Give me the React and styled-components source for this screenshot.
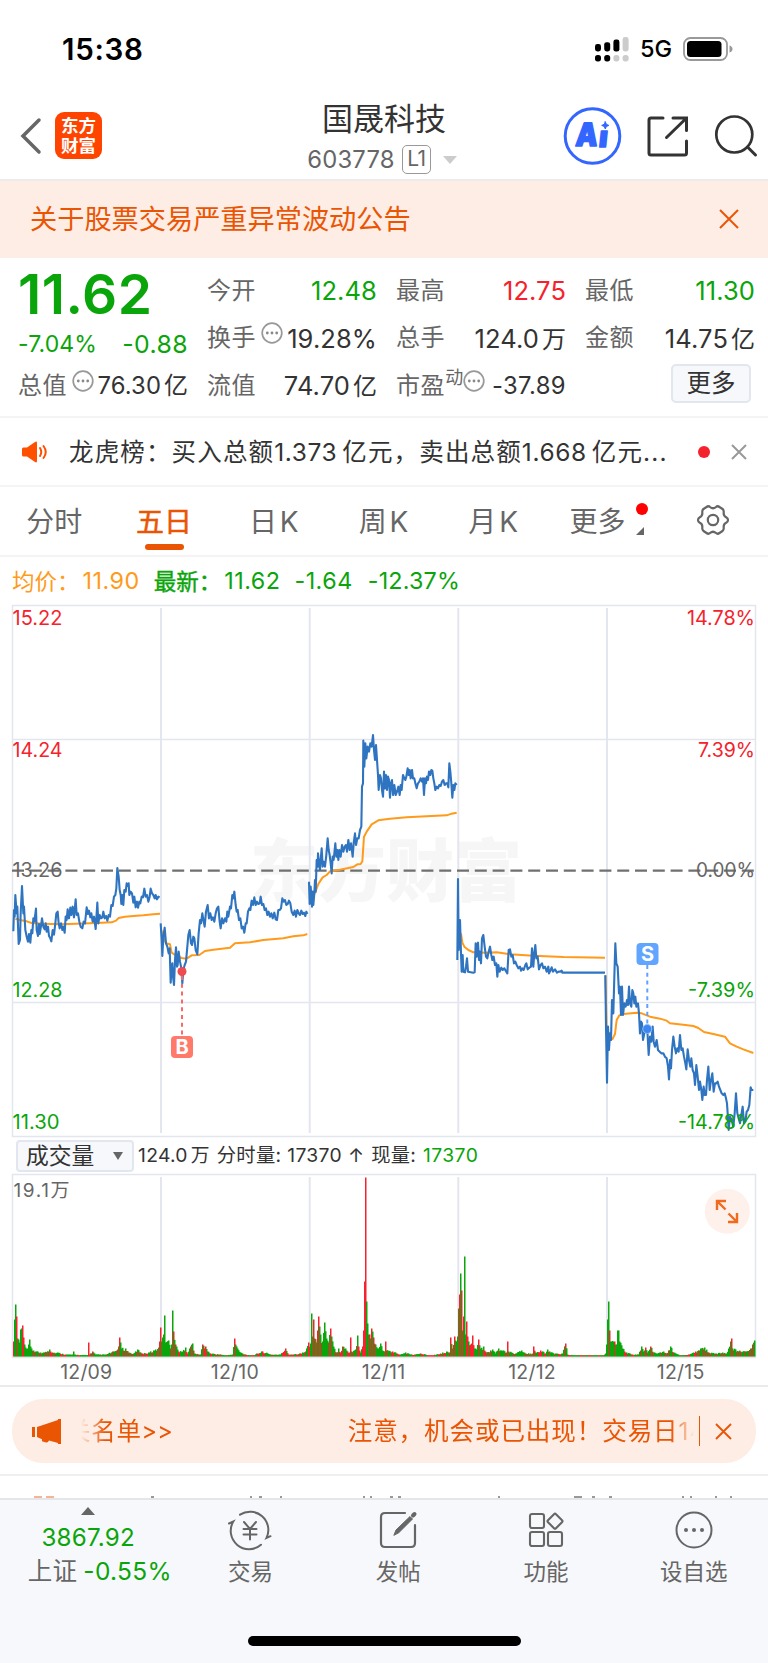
import React from "react";
import styled, { createGlobalStyle } from "styled-components";

const C = {
  green: "#0aa50a",
  red: "#f5222d",
  orange: "#ea5504",
  peach: "#feede5",
  amber: "#ff9a1a",
  blue: "#2f74c0",
  dark: "#333",
  gray: "#666",
  grid: "#e3e6ee",
  line: "#f4f4f5",
};

const FONT = 'Inter, "Noto Sans CJK SC", sans-serif';

const Global = createGlobalStyle`
  * { box-sizing: border-box; }
  body { margin: 0; background: #fff; }
  svg { display: block; flex: none; overflow: visible; }
`;

const Screen = styled.div`
  width: 768px;
  height: 1663px;
  overflow: hidden;
  display: flex;
  flex-direction: column;
  background: #fff;
  color: ${C.dark};
  font-family: ${FONT};
  white-space: nowrap;
`;

const Text = styled.span`
  font-size: ${(p) => p.$size}px;
  line-height: ${(p) => Math.round(p.$size * 1.2)}px;
  letter-spacing: ${(p) => p.$ls || 0}px;
  color: ${(p) => p.$color || "inherit"};
  font-weight: ${(p) => p.$weight || 400};
  margin-left: ${(p) => p.$ml || 0}px;
  -webkit-text-stroke: ${(p) => (p.$strong ? "0.4px currentColor" : "0")};
`;

/* status bar */
const StatusBar = styled.div`
  height: 98px;
  flex: none;
  display: flex;
  justify-content: space-between;
  align-items: center;
  padding: 0 35px 0 62px;
`;
const StatusIcons = styled.div`
  display: flex;
  align-items: center;
`;

/* header */
const Header = styled.header`
  height: 83px;
  flex: none;
  display: grid;
  grid-template-columns: 248px 1fr 248px;
  border-bottom: 2px solid #ececee;
`;
const HeaderLeft = styled.div`
  display: flex;
  align-items: flex-start;
  padding: 14px 0 0 20px;
`;
const Logo = styled.div`
  width: 47px;
  height: 47px;
  margin-left: 14px;
  border-radius: 9px;
  background: #ff4400;
  color: #fff;
  font-weight: 700;
  font-size: 17.5px;
  line-height: 20px;
  padding: 4px 0 0 6px;
  white-space: pre-line;
`;
const HeaderTitle = styled.div`
  display: flex;
  flex-direction: column;
  align-items: center;
  padding-top: 2px;
`;
const CodeLine = styled.div`
  display: flex;
  align-items: center;
  margin-top: 8px;
  margin-left: -4px;
`;
const Level = styled.span`
  width: 29px;
  height: 29px;
  margin-left: 7px;
  border: 1.5px solid #999;
  border-radius: 5px;
  font-size: 21px;
  line-height: 26px;
  text-align: center;
  letter-spacing: -0.8px;
  color: ${C.gray};
`;
const HeaderRight = styled.div`
  display: flex;
  align-items: flex-start;
  justify-content: flex-end;
  padding: 8px 11px 0 0;
`;

/* notices */
const Notice = styled.div`
  height: 77px;
  flex: none;
  display: flex;
  align-items: center;
  justify-content: space-between;
  padding: 0 29px 1px 30px;
  background: ${C.peach};
`;

/* quote */
const Quote = styled.section`
  height: 160px;
  flex: none;
  display: grid;
  grid-template-columns: repeat(4, 170px);
  column-gap: 19px;
  padding: 9px 0 0 18px;
  border-bottom: 2px solid ${C.line};
`;
const QuoteColumn = styled.div`
  display: flex;
  flex-direction: column;
`;
const StatRow = styled.div`
  height: ${(p) => p.$h || 47.5}px;
  display: flex;
  align-items: center;
  padding-top: ${(p) => p.$pt || 0}px;
  padding-bottom: ${(p) => p.$pb || 0}px;
  justify-content: ${(p) => (p.$end ? "flex-end" : "space-between")};
`;
const StatLabel = styled.span`
  display: flex;
  align-items: center;
  font-size: 24px;
  line-height: 28px;
  letter-spacing: 0.6px;
  color: ${C.gray};
`;
const Sup = styled.sup`
  font-size: 18px;
  line-height: 18px;
  margin-bottom: 15px;
  letter-spacing: 0;
`;
const InfoMark = styled.svg`
  margin-bottom: 10px;
  margin-left: ${(p) => p.$ml}px;
`;
const MoreButton = styled.button`
  width: 80px;
  height: 39px;
  margin-right: 4px;
  padding: 0;
  border: 2px solid #e3e6ee;
  border-radius: 5px;
  background: #f7f8fb;
  font: 24.5px/33px ${FONT};
  color: ${C.dark};
`;

const News = styled.div`
  height: 69px;
  flex: none;
  display: flex;
  align-items: center;
  padding: 0 21px 0 21px;
  border-bottom: 2px solid ${C.line};
`;
const NewsText = styled.div`
  flex: 1;
  margin-left: 21px;
  font-size: 24.5px;
  line-height: 30px;
`;
const Dot = styled.i`
  width: 12px;
  height: 12px;
  border-radius: 50%;
  background: ${C.red};
  margin-right: 21px;
`;

/* period tabs */
const Tabs = styled.nav`
  height: 70px;
  flex: none;
  display: grid;
  grid-template-columns: repeat(7, 1fr);
  border-bottom: 2px solid ${C.line};
`;
const Tab = styled.div`
  position: relative;
  display: flex;
  align-items: center;
  justify-content: center;
  font-size: 28px;
  word-spacing: -5px;
  padding: 0 ${(p) => p.$shift || 1}px 3px 0;
  color: ${(p) => (p.$active ? C.orange : C.gray)};
  -webkit-text-stroke: ${(p) => (p.$active ? "0.5px currentColor" : "0")};
`;
const Underline = styled.i`
  position: absolute;
  bottom: 5px;
  width: 39px;
  height: 6.5px;
  border-radius: 3px;
  background: ${C.orange};
`;
const TabMark = styled.svg`
  position: absolute;
  left: 85.5px;
  top: 14px;
`;

const Legend = styled.div`
  height: 48px;
  flex: none;
  display: flex;
  align-items: center;
  padding-left: 12px;
`;
const ChartWrap = styled.div`
  height: ${(p) => p.$h}px;
  flex: none;
  padding-left: 12px;
`;
const VolumeBar = styled.div`
  height: 37px;
  flex: none;
  display: flex;
  align-items: center;
  padding-left: 16px;
`;
const VolumeSelect = styled.div`
  width: 118px;
  height: 32px;
  display: flex;
  align-items: center;
  justify-content: space-between;
  padding: 0 9px 0 8px;
  border: 2px solid #e3e6ee;
  border-radius: 4px;
  background: #f7f8fb;
`;
const Dates = styled.div`
  height: 30px;
  flex: none;
  display: grid;
  grid-template-columns: repeat(5, 148.6px);
  padding: 2px 0 0 12px;
  align-items: center;
  justify-items: center;
  border-bottom: 2px solid #ebebed;
`;

const Banner = styled.div`
  height: 64px;
  flex: none;
  margin: 12px 12px 11px;
  display: flex;
  align-items: center;
  padding: 0 24px 0 19px;
  border-radius: 31px;
  background: ${C.peach};
  color: ${C.orange};
`;
const Marquee = styled.div`
  width: 615px;
  margin-left: 19px;
  overflow: hidden;
  mask-image: linear-gradient(90deg, transparent 0, #000 24px, #000 590px, transparent 613px);
`;
const MarqueeText = styled.div`
  display: flex;
  align-items: center;
  height: 36px;
  margin-left: -15px;
`;
const Divider = styled.i`
  width: 1.5px;
  height: 30px;
  margin-right: 15px;
  margin-left: 4px;
  background: ${C.orange};
`;
const NextPanel = styled.div`
  height: 24px;
  flex: none;
  display: flex;
  align-items: flex-end;
  border-top: 2px solid #eeeff0;
`;

/* bottom bar */
const BottomBar = styled.footer`
  flex: 1;
  background: #f7f8fb;
  border-top: 2px solid #e4e6e9;
  display: flex;
  flex-direction: column;
  align-items: center;
`;
const BottomItems = styled.div`
  width: 100%;
  display: grid;
  grid-template-columns: 176.5px repeat(4, 147.8px);
`;
const IndexItem = styled.div`
  display: flex;
  flex-direction: column;
  align-items: center;
  padding-top: 7px;
  color: ${C.green};
`;
const IndexRow = styled.div`
  display: flex;
  align-items: center;
  margin: 5px 0 0 23px;
`;
const BottomItem = styled.div`
  display: flex;
  flex-direction: column;
  align-items: center;
  gap: 9px;
  padding-top: 11px;
  color: ${C.gray};
`;
const HomeIndicator = styled.i`
  width: 273px;
  height: 10px;
  margin-top: 50px;
  border-radius: 5px;
  background: #000;
`;

const Cross = ({ size, color, w = 2 }) => (
  <svg width={size} height={size} viewBox={`0 0 ${size} ${size}`} stroke={color} strokeWidth={w}>
    <path d={`M1 1L${size - 1} ${size - 1}M${size - 1} 1L1 ${size - 1}`} />
  </svg>
);

const Info = ({ ml }) => (
  <InfoMark $ml={ml} width="22" height="22" viewBox="0 0 22 22">
    <circle cx="11" cy="11" r="9.8" fill="none" stroke="#999" strokeWidth="1.7" />
    <g fill="#888">
      <circle cx="6.3" cy="11" r="1.4" />
      <circle cx="11" cy="11" r="1.4" />
      <circle cx="15.7" cy="11" r="1.4" />
    </g>
  </InfoMark>
);

const Signal = () => (
  <svg width="34" height="25" viewBox="0 0 34 25">
    <rect x="0" y="7" width="6" height="7.5" rx="2.4" />
    <rect x="9.2" y="5.2" width="6" height="9.3" rx="2.4" />
    <rect x="18.4" y="2.6" width="6" height="12" rx="2.4" />
    <rect x="27.6" y="0" width="6" height="14.5" rx="2.4" fill="#ccc" />
    <rect x="0" y="18" width="6" height="6.4" rx="2.6" />
    <rect x="9.2" y="18" width="6" height="6.4" rx="2.6" />
    <rect x="18.4" y="18" width="6" height="6.4" rx="2.6" fill="#ccc" />
    <rect x="27.6" y="18" width="6" height="6.4" rx="2.6" fill="#ccc" />
  </svg>
);

const Battery = () => (
  <svg width="50" height="24" viewBox="0 0 50 24" style={{ marginLeft: 11 }}>
    <rect x="1" y="1" width="43" height="22" rx="6.5" fill="none" stroke="#999" strokeWidth="1.8" />
    <rect x="4" y="4" width="34.5" height="16" rx="3.5" />
    <path d="M46.5 8.5q3 1 3 3.5t-3 3.5z" fill="#999" />
  </svg>
);

const HeaderIcons = () => (
  <svg width="194" height="60" viewBox="0 0 194 60" fill="none" stroke="#333" strokeWidth="3" strokeLinecap="round">
    <circle cx="29.5" cy="30" r="27.3" stroke="#3366ff" />
    <g fill="#3366ff" stroke="#3366ff" strokeWidth="1.6" strokeLinejoin="round" fontFamily="Inter" fontWeight="900">
      <text transform="translate(12 40.300) skewX(-5)" fontSize="32" textLength="22" lengthAdjust="spacingAndGlyphs">A</text>
      <text transform="translate(35.300 41.300) skewX(-6)" fontSize="29">ı</text>
      <path d="M42.300 15.800l1.100 2.500 2.500 1.100-2.500 1.100-1.100 2.500-1.100-2.500-2.500-1.100 2.500-1.100z" strokeWidth="1" />
    </g>
    <path d="M100 12H88q-2 0-2 2v33q0 2 2 2h33.500q2 0 2-2V35M110 12h13.500v12.500M123 12.500L103.500 31.500" />
    <circle cx="171.300" cy="28.500" r="18" strokeWidth="2.700" />
    <path d="M184.500 41l8 8" />
  </svg>
);

const Speaker = () => (
  <svg width="27" height="22" viewBox="0 0 27 22">
    <path d="M1 8q0-1.500 1.500-1.500H6L14 1q2-1.200 2 1v18q0 2.200-2 1L6 15.500H2.500Q1 15.500 1 14z" fill="#ff5000" />
    <path d="M19 7q2.500 4 0 8M22.500 5q4.500 6 0 12" fill="none" stroke="#ff5000" strokeWidth="2" strokeLinecap="round" />
  </svg>
);

const Gear = () => (
  <svg width="34" height="32" viewBox="-17 -16 34 32" fill="none" stroke="#666" strokeWidth="2.200" strokeLinejoin="round">
    <path d="M-6.500-13Q-4.500-14.500-3-13Q0-10.500 3-13Q4.500-14.500 6.500-13L9.500-11Q11-10 10.700-7.500Q10.300-4 13.500-2.500Q15-1.700 15 0Q15 1.700 13.500 2.500Q10.300 4 10.700 7.500Q11 10 9.500 11L6.500 13Q4.500 14.500 3 13Q0 10.500-3 13Q-4.500 14.500-6.500 13L-9.500 11Q-11 10-10.700 7.500Q-10.300 4-13.500 2.500Q-15 1.700-15 0Q-15-1.700-13.500-2.500Q-10.300-4-10.700-7.500Q-11-10-9.500-11Z" />
    <circle r="5.200" />
  </svg>
);

/* price series: one polyline per trading day, in thirds of a pixel */
const DAYS = [
  {
    o: [0, 780],
    price:
      "40,454 42,390 44,410 46,345 50,400 52,380 56,492 60,480 62,400 66,318 70,400 72,380 76,450 80,470 84,485 87,462 91,488 94,450 97,460 100,415 103,425 108,386 110,450 114,468 117,432 119,462 122,445 126,415 130,440 134,448 137,430 140,455 144,440 147,468 151,475 154,484 158,450 162,464 166,430 169,400 173,395 176,430 179,445 183,430 187,450 190,440 194,458 197,410 200,420 203,388 207,415 211,383 214,405 218,380 222,412 227,358 230,405 234,400 238,425 242,440 247,445 251,425 255,430 260,382 264,402 267,392 271,412 274,400 278,425 282,410 287,447 290,400 292,368 295,430 299,405 303,415 307,412 310,395 314,415 318,408 322,422 326,405 330,410 334,375 338,378 342,350 346,345 349,325 352,264 356,290 359,330 362,345 364,372 367,345 370,375 373,330 377,335 380,310 383,318 386,310 388,345 392,335 396,340 400,368 403,350 407,382 411,365 414,383 418,365 421,370 425,350 429,352 433,326 437,350 441,345 445,365 449,350 452,326 456,340 460,345 464,355 467,345 471,358 475,350 479,352",
    avg: "46,416 60,420 80,424 95,429 130,431 180,433 230,431 290,429 335,427 348,422 356,414 375,410 400,408 430,406 460,403 480,401",
  },
  {
    o: [0, 780],
    price:
      "482,430 485,480 487,528 490,470 494,443 498,490 502,500 506,520 509,505 512,608 515,560 517,550 519,590 522,615 525,540 528,502 531,560 533,555 536,515 540,545 543,560 545,580 547,610 550,570 554,555 558,545 562,500 565,465 569,450 573,490 576,495 580,470 583,475 587,510 592,523 596,460 600,420 603,430 607,400 611,425 614,440 618,395 623,375 627,415 631,400 635,420 639,412 643,425 647,400 651,385 655,380 659,425 662,445 666,415 670,430 675,415 679,425 682,395 685,410 690,380 693,385 697,345 700,355 703,335 707,375 710,395 713,390 717,420 721,415 725,445 729,440 733,458 737,430 740,430 744,395 748,385 751,390 755,362 759,375 763,352 767,375 771,365 775,372 779,370 782,350 786,375 790,372 794,390 798,385 802,405 806,395 810,410 814,400 818,415 823,398 827,418 831,420 835,390 839,390 843,385 847,355 851,365 855,360 859,375 863,372 867,362 871,370 875,395 880,405 884,392 888,410 892,390 896,400 900,405 904,392 908,402 912,398 916,408 919,395 922,402",
    avg: "484,450 490,475 498,490 510,493 515,518 530,528 545,534 560,536 575,526 598,525 615,513 640,509 690,503 705,490 750,487 790,480 850,475 880,469 910,466 922,462",
  },
  {
    o: [300, 700],
    price:
      "27,545 29,612 32,560 34,590 36,620 38,575 40,615 43,580 45,540 47,575 50,480 53,500 54,460 57,490 60,510 62,480 65,445 68,500 71,485 75,500 79,465 83,415 86,450 89,465 92,490 95,520 98,470 101,480 106,430 109,470 112,450 115,480 118,450 122,470 126,435 130,455 134,440 138,435 141,455 145,420 149,450 153,430 158,470 161,430 165,400 168,435 172,415 176,415 180,390 184,380 186,260 189,250 190,122 193,200 196,130 199,175 203,140 207,155 211,130 215,140 219,105 222,150 225,180 228,135 231,180 234,225 236,270 240,225 243,235 246,270 249,290 252,215 255,265 258,225 261,270 264,230 267,240 270,293 273,250 276,240 279,285 283,255 287,285 291,275 295,260 299,285 302,255 305,270 309,225 313,235 316,240 319,230 323,205 326,225 329,210 332,235 336,210 339,235 343,235 346,250 350,265 354,250 358,245 362,235 366,245 369,235 372,285 375,235 378,250 381,230 384,240 387,215 391,225 394,210 397,212 400,235 403,250 406,270 410,260 414,265 418,255 422,258 426,245 430,240 434,255 438,250 442,250 445,262 448,190 451,215 454,250 457,293 460,255 463,270 466,250 470,255",
    avg: "45,580 55,552 68,532 80,525 90,514 120,509 160,501 172,493 182,492 187,484 190,440 192,410 200,395 215,373 235,361 270,356 320,352 380,349 440,346 455,341 470,338",
  },
  {
    o: [300, 700],
    price:
      "472,780 474,537 476,750 478,700 480,660 483,760 485,815 488,765 490,815 495,817 498,800 501,775 504,815 520,818 524,817 527,730 530,770 532,735 534,728 537,780 539,755 543,790 546,715 550,705 554,740 558,770 562,775 566,755 570,740 574,765 577,780 581,770 585,795 589,790 592,830 595,795 599,815 604,803 608,810 613,805 617,812 622,820 626,750 630,748 634,770 638,765 642,790 646,785 650,795 655,805 660,800 663,812 667,805 671,810 676,795 679,790 683,808 688,803 693,800 696,745 698,770 700,800 703,760 706,735 709,775 713,770 717,808 722,795 726,790 730,805 735,800 740,815 745,800 747,820 751,812 755,802 759,815 765,808 771,818 776,815 781,815 785,812 787,818 915,818",
    avg: "483,700 487,728 493,740 505,750 520,757 560,758 590,757 630,763 700,767 790,771 915,773",
  },
  {
    o: [450, 860],
    price:
      "466,346 468,500 471,668 474,500 477,570 480,520 483,540 486,420 490,460 493,350 496,250 499,310 503,320 507,400 510,380 513,465 516,380 519,465 523,430 527,440 531,420 534,435 537,380 540,430 544,440 547,390 550,400 553,430 556,410 559,440 564,430 567,460 570,520 573,485 576,490 579,540 583,520 588,500 592,510 596,585 600,530 604,545 608,500 611,545 615,560 620,540 624,570 629,575 634,580 640,580 645,590 650,595 654,620 657,658 660,600 663,625 666,570 670,530 674,560 678,580 682,565 686,575 690,525 694,570 698,565 702,590 706,610 709,628 713,568 717,600 721,620 724,595 728,630 732,640 735,675 739,615 743,650 747,690 750,665 754,690 757,720 761,680 764,705 768,705 771,660 775,620 779,690 783,660 787,640 791,695 795,670 799,670 803,665 807,680 811,690 815,700 820,705 824,700 828,715 831,730 833,760 836,810 840,770 845,780 850,800 854,760 858,700 862,760 866,775 870,790 874,765 878,740 882,790 886,785 890,755 894,750 898,735 902,682 905,690 910,690",
    avg: "466,346 471,540 487,538 495,522 500,480 508,466 520,462 560,458 575,460 600,470 630,476 650,482 660,490 700,494 730,498 745,504 762,516 790,522 825,530 840,550 860,560 880,568 910,579",
  },
];

const COLS = [161, 309.7, 458.3, 607];

const AXIS = [
  ["15.22", "14.78%", 617.5, C.red, 50, 68],
  ["14.24", "7.39%", 750, C.red, 50, 57],
  ["13.26", "0.00%", 870, C.gray, 50, 59],
  ["12.28", "-7.39%", 989.5, C.green, 50, 67],
  ["11.30", "-14.78%", 1122, C.green, 47, 77],
];

const PriceChart = () => (
  <svg width="744" height="532" viewBox="12 605 744 532" fontFamily={FONT}>
    <text x="250" y="896" fontSize="68" fontWeight="900" fill="#f6f6f6" textLength="272">东方财富</text>
    <g fill="none" stroke={C.grid} strokeWidth="2">
      <rect x="12.500" y="605.500" width="743" height="531" strokeWidth="1.500" />
      {COLS.map((x) => (
        <path key={x} d={`M${x} 608V1133`} />
      ))}
      <path d="M12 739.500H755M12 1002.500H755" strokeWidth="1.500" />
    </g>
    <path d="M12 870.600H755" stroke="#707070" strokeWidth="2.200" strokeDasharray="12 5.800" />
    {DAYS.map((d, i) => (
      <g key={i} transform={`translate(${d.o[0]} ${d.o[1]}) scale(.33333)`} fill="none" strokeLinejoin="round">
        <polyline points={d.avg} stroke={C.amber} strokeWidth="6" />
        <polyline points={d.price} stroke={C.blue} strokeWidth="6.300" />
      </g>
    ))}
    {AXIS.map(([l, r, y, c, lw, rw]) => (
      <g key={l} fill={c} fontSize="19.800">
        <text x="12.500" y={y + 7.200} textLength={lw} lengthAdjust="spacingAndGlyphs">{l}</text>
        <text x={755 - rw} y={y + 7.200} textLength={rw} lengthAdjust="spacingAndGlyphs">{r}</text>
      </g>
    ))}
    <path d="M182 976v60" stroke="#fb6a62" strokeWidth="2" strokeDasharray="4 3.800" />
    <circle cx="182" cy="971.500" r="4.500" fill="#ef4c50" />
    <rect x="171" y="1036" width="22" height="22" rx="4" fill="#ff7a6b" />
    <text x="182" y="1054.200" fontSize="20" fontWeight="700" fill="#fff" textAnchor="middle">B</text>
    <path d="M647.300 965v61" stroke="#62a0ff" strokeWidth="2" strokeDasharray="4 3.800" />
    <circle cx="647.300" cy="1029" r="4.500" fill="#3b86f0" stroke="#8cbcff" />
    <rect x="636.500" y="943" width="22" height="22" rx="4" fill="#62a5ff" />
    <text x="647.500" y="961.200" fontSize="20" fontWeight="700" fill="#fff" textAnchor="middle">S</text>
  </svg>
);

/* volume: x:height[:colour], interpolated between the listed minutes */
const VOLUME =
  "13:15 14:37:g 15:52:g 16:40:r 17:18:g 18:17:g 19:14:g 20:27:g 21:28:g 22:31:r 23:19:r 24:12 25:9 27:8 28:12 29:17:g 30:10 31:8 33:6 36:5 40:4 44:4 49:7:g 52:4 57:4 65:2 72:2 73:5:g 74:2 80:1.5 87:1.5 88:14:r 89:2 92:5:r 95:2 105:2 113:5:r 117:7 118:10 119:19:r 120:14:g 121:8 125:8 128:4 133:3 137:7 142:3 148:4 155:7 158:9 159:15:r 160:29:r 161:15:g 162:19:g 163:22:g 164:41:g 165:14 168:16:g 170:8 171:12:g 172:46:g 173:25:r 175:12 178:5 182:5 185:9:g 187:3 190:10:r 192:13:g 194:3 200:2 202:12:r 205:10:r 207:5 210:3 220:2 225:1 232:2 234:18:r 235:12 237:8 240:4 245:2 254:1 256:3 262:5:r 270:2 280:2 285:8:r 288:2 300:3 305:5 308:14 310:13:g 311:43:g 312:20:g 313:37:r 314:18:r 316:14:g 317:26:r 318:40:r 319:30:g 320:22:g 322:15:g 324:34:g 326:18:g 328:14:r 330:28:r 331:20:g 333:10 336:4 338:8 340:4 342:10 345:8 347:5 349:4 350:19:r 351:5 355:7 357:21:g 358:10 360:4 362:10:r 363:26:r 364:75:r 365:179:r 366:55:g 367:33:g 368:22:g 369:22:r 370:18:g 371:28:r 373:19:r 375:12 378:8 380:13:g 382:6 384:5 385:15:r 386:6 392:5 400:2 405:4 410:2 415:2 420:3 430:1 440:3 446:5 449:4 450:19:r 452:8 454:20:r 456:15:g 457:20:g 458:48:g 459:62:r 460:83:g 461:66:r 462:26:g 463:40:r 464:100:g 465:22:g 466:35:r 467:20 468:15 470:12 472:21:r 474:8 476:7 478:17:r 480:8 483:10:g 486:4 492:7 495:3 498:8 503:6 506:4 507:15:r 508:5 515:3 521:6 525:3 532:3 533:10:r 535:4 540:6 545:3 547:7 550:4 555:3 562:3 565:13:r 567:2 575:1 590:0.5 603:1 605:3:g 606:12:g 607:37:g 608:55:g 609:26:r 610:15:g 611:15 614:15 616:12 617:26:g 618:26:g 619:15 622:8 626:4 632:2 638:2 641:10:g 643:5 645:9:r 647:4 650:10 653:4 657:3 663:5 666:3 670:10:g 673:4 680:1 688:2 695:5 700:8 704:9 708:4 715:3 722:4 726:3 728:8 730:15:g 731:18:r 732:8 735:7 740:5 745:5 750:8 752:12:r 754:16:g";

const bars = (() => {
  const pts = VOLUME.split(" ").map((s) => {
    const [x, h, c] = s.split(":");
    return { x: +x, h: +h, c };
  });
  const out = [];
  for (let k = 0; k < pts.length; k++) {
    const a = pts[k];
    const b = pts[k + 1];
    const end = b ? b.x : a.x + 1;
    for (let x = a.x; x < end; x++) {
      const n = Math.abs(Math.sin(x * 12.9898) * 43758.5453) % 1;
      const base = b ? a.h + ((b.h - a.h) * (x - a.x)) / (b.x - a.x) : a.h;
      const h = x === a.x ? a.h : base * (0.7 + 0.4 * n);
      const c = x === a.x && a.c ? a.c : n > 0.38 ? "g" : "r";
      out.push({ x, h: Math.max(h, 1.3), c });
    }
  }
  return out;
})();

const VolumeChart = () => (
  <svg width="744" height="183" viewBox="12 1174 744 183" fontFamily={FONT}>
    <g fill="none" stroke={C.grid} strokeWidth="2">
      <rect x="12.500" y="1174.500" width="743" height="183" strokeWidth="1.500" />
      {COLS.map((x) => (
        <path key={x} d={`M${x} 1177V1356`} />
      ))}
    </g>
    {bars.map((b) => (
      <rect key={b.x} x={b.x} y={1356.500 - b.h} width="1.500" height={b.h} fill={b.c === "g" ? C.green : C.red} />
    ))}
    <text x="13.500" y="1196.500" fontSize="19" fill={C.gray} textLength="56">19.1万</text>
    <circle cx="727.300" cy="1211.300" r="22.500" fill="#fef0ea" />
    <path d="M717 1210v-9h9M717 1201l8.500 8.500M737 1213v9h-9M737 1222l-8.500-8.500" fill="none" stroke="#f26a1b" strokeWidth="2.400" />
  </svg>
);

const Horn = () => (
  <svg width="31" height="27" viewBox="0 0 31 27" fill={C.orange}>
    <path d="M1 9h3v10H1zM6 9L27 2V1h3v25h-3v-1l-9-2.500q-1 2.500-3 2l-4-1.300v-2L6 19z" />
  </svg>
);

const TradeIcon = () => (
  <svg width="44" height="38" viewBox="-22 -19 44 38" fill="none" stroke="#666" strokeWidth="2" strokeLinecap="round">
    <path d="M-10-15.300A18.300 18.300 0 0 1 16.500 8l4-1.800M-21-6.500l4.300-2A18.300 18.300 0 0 0 11 14.700" />
    <path d="M-6-8l6 7 6-7M0-1v10.500M-6.500-1h13M-6.500 4.500h13" />
  </svg>
);
const PostIcon = () => (
  <svg width="38" height="38" viewBox="0 0 38 38" fill="none" stroke="#666" strokeWidth="2.200" strokeLinecap="round">
    <path d="M26 2H6Q2 2 2 6v26q0 4 4 4h26q4 0 4-4V14" />
    <path d="M15 24l2-5L31 5.500l2.500 2.500L20 21.500z" fill="#666" strokeWidth="1" strokeLinejoin="round" />
    <path d="M34 4.500l1.500-1.500" strokeWidth="4" />
  </svg>
);
const AppsIcon = () => (
  <svg width="36" height="38" viewBox="0 0 36 38" fill="none" stroke="#666" strokeWidth="2.100" strokeLinejoin="round">
    <rect x="2" y="3" width="14" height="14" rx="2" />
    <rect x="2" y="21" width="14" height="14" rx="2" />
    <rect x="20" y="21" width="14" height="14" rx="2" />
    <path d="M26 3.200q1-1 2 0l6 6q1 1 0 2l-6 6q-1 1-2 0l-6-6q-1-1 0-2z" />
  </svg>
);
const DotsIcon = () => (
  <svg width="38" height="38" viewBox="0 0 38 38" fill="none" stroke="#666" strokeWidth="2">
    <circle cx="19" cy="19" r="17.500" />
    <g fill="#666" stroke="none">
      <circle cx="11" cy="19" r="2" />
      <circle cx="19" cy="19" r="2" />
      <circle cx="27" cy="19" r="2" />
    </g>
  </svg>
);

const ACTIONS = [
  ["交易", TradeIcon],
  ["发帖", PostIcon],
  ["功能", AppsIcon],
  ["设自选", DotsIcon],
];

const Stat = ({ label, sup, info, value, unit, color, size = 25.5, ls = 0.1 }) => (
  <StatRow>
    <StatLabel>
      {label}
      {sup && <Sup>{sup}</Sup>}
      {info && <Info ml={sup ? 0 : 5} />}
    </StatLabel>
    <span>
      <Text $size={size} $ls={ls} $color={color}>{value}</Text>
      {unit && <Text $size={24} $ml={3}>{unit}</Text>}
    </span>
  </StatRow>
);

export default function App() {
  return (
    <Screen>
      <Global />
      <StatusBar>
        <Text $size={29.500} $weight={600} $color="#000" $ls={0.700}>15:38</Text>
        <StatusIcons>
          <Signal />
          <Text $size={23.500} $weight={450} $color="#000" $ml={11}>5G</Text>
          <Battery />
        </StatusIcons>
      </StatusBar>

      <Header>
        <HeaderLeft>
          <svg width="21" height="36" viewBox="0 0 21 36" style={{ marginTop: 6 }}>
            <path d="M19 2L3 18l16 16" fill="none" stroke="#666" strokeWidth="3.500" strokeLinecap="round" />
          </svg>
          <Logo>{"东方\n财富"}</Logo>
        </HeaderLeft>
        <HeaderTitle>
          <Text $size={31}>国晟科技</Text>
          <CodeLine>
            <Text $size={23.800} $color={C.gray} $ls={0.200}>603778</Text>
            <Level>L1</Level>
            <svg width="14" height="8" viewBox="0 0 14 8" style={{ marginLeft: 12 }}>
              <path d="M0 0h14L7 8z" fill="#ccc" />
            </svg>
          </CodeLine>
        </HeaderTitle>
        <HeaderRight>
          <HeaderIcons />
        </HeaderRight>
      </Header>

      <Notice>
        <Text $size={27.200} $color={C.orange}>关于股票交易严重异常波动公告</Text>
        <Cross size={20} color={C.orange} />
      </Notice>

      <Quote>
        <QuoteColumn>
          <StatRow $h={54}>
            <Text $size={55} $weight={600} $color={C.green} $ls={0.500}>11.62</Text>
          </StatRow>
          <StatRow $h={41} $pt={4}>
            <Text $size={23} $color={C.green} $ls={0.150}>-7.04%</Text>
            <Text $size={24.800} $color={C.green} $ls={0.400}>-0.88</Text>
          </StatRow>
          <Stat label="总值" info value="76.30" unit="亿" size={23.800} />
        </QuoteColumn>
        <QuoteColumn>
          <Stat label="今开" value="12.48" color={C.green} />
          <Stat label="换手" info value="19.28%" />
          <Stat label="流值" value="74.70" unit="亿" />
        </QuoteColumn>
        <QuoteColumn>
          <Stat label="最高" value="12.75" color={C.red} />
          <Stat label="总手" value="124.0" unit="万" />
          <Stat label="市盈" sup="动" info value="-37.89" size={23.800} ls={0.400} />
        </QuoteColumn>
        <QuoteColumn>
          <Stat label="最低" value="11.30" color={C.green} />
          <Stat label="金额" value="14.75" unit="亿" />
          <StatRow $end $pb={4}>
            <MoreButton>更多</MoreButton>
          </StatRow>
        </QuoteColumn>
      </Quote>

      <News>
        <Speaker />
        <NewsText>
          <Text $size={24.500} $ls={1.150}>龙虎榜：买入总额</Text>
          <Text $size={24.500} $ls={0.600}>1.373</Text>
          <Text $size={24.500} $ls={1.150} $ml={5}>亿元，卖出总额</Text>
          <Text $size={24.500} $ls={0.600}>1.668</Text>
          <Text $size={24.500} $ls={1.150} $ml={5}>亿元...</Text>
        </NewsText>
        <Dot />
        <Cross size={16} color="#999" />
      </News>

      <Tabs>
        <Tab>分时</Tab>
        <Tab $active>
          五日
          <Underline />
        </Tab>
        <Tab>日 K</Tab>
        <Tab>周 K</Tab>
        <Tab>月 K</Tab>
        <Tab $shift={12}>
          更多
          <TabMark width="16" height="36" viewBox="0 0 16 36">
            <circle cx="8" cy="8" r="6" fill="#f00" />
            <path d="M10 26v8H2z" fill="#666" />
          </TabMark>
        </Tab>
        <Tab>
          <Gear />
        </Tab>
      </Tabs>

      <Legend>
        <Text $size={22.500} $color={C.amber}>均价：</Text>
        <Text $size={23.300} $ls={0.500} $color={C.amber} $ml={3}>11.90</Text>
        <Text $size={22.500} $color={C.green} $strong $ml={14}>最新：</Text>
        <Text $size={23.300} $ls={0.500} $color={C.green} $ml={3}>11.62</Text>
        <Text $size={23.300} $ls={0.500} $color={C.green} $ml={14}>-1.64</Text>
        <Text $size={23.300} $ls={0.200} $color={C.green} $ml={15}>-12.37%</Text>
      </Legend>

      <ChartWrap $h={532}>
        <PriceChart />
      </ChartWrap>

      <VolumeBar>
        <VolumeSelect>
          <Text $size={22.800}>成交量</Text>
          <svg width="10" height="8" viewBox="0 0 10 8">
            <path d="M0 0h10L5 8z" fill="#666" />
          </svg>
        </VolumeSelect>
        <Text $size={19.300} $ls={0.300} $ml={4}>124.0</Text>
        <Text $size={18.800} $ml={3}>万</Text>
        <Text $size={19.300} $ls={0.350} $ml={7}>分时量: 17370</Text>
        <Text $size={19.300} $ml={6}>↑</Text>
        <Text $size={19.300} $ml={7} $ls={0.200}>现量:</Text>
        <Text $size={19.300} $ls={0.450} $ml={7} $color={C.green}>17370</Text>
      </VolumeBar>

      <ChartWrap $h={183}>
        <VolumeChart />
      </ChartWrap>
      <Dates>
        {["12/09", "12/10", "12/11", "12/12", "12/15"].map((d) => (
          <Text key={d} $size={19.500} $ls={0.200} $color={C.gray}>{d}</Text>
        ))}
      </Dates>

      <Banner>
        <Horn />
        <Marquee>
          <MarqueeText>
            <Text $size={24.500} $ls={0.700}>关名单</Text>
            <Text $size={23.500}>&gt;&gt;</Text>
            <Text $size={24.500} $ls={0.950} $ml={175}>注意，机会或已出现！交易日14</Text>
          </MarqueeText>
        </Marquee>
        <Divider />
        <Cross size={17} color={C.orange} w={1.800} />
      </Banner>

      <NextPanel>
        <svg width="768" height="2" viewBox="0 0 768 2">
          <path d="M34 1h8M46 1h8" stroke="#f4b596" strokeWidth="2" />
          <path
            d="M151 1h3M250 1h2M259 1h3M280 1h2M363 1h2M370 1h2M390 1h3M398 1h3M498 1h2M574 1h8M592 1h3M609 1h3M682 1h2M690 1h2M715 1h2M730 1h2"
            stroke="#999"
            strokeWidth="2"
          />
        </svg>
      </NextPanel>

      <BottomBar>
        <BottomItems>
          <IndexItem>
            <svg width="14" height="8" viewBox="0 0 14 8">
              <path d="M0 8h14L7 0z" fill="#666" />
            </svg>
            <Text $size={24.200} $ls={0.200} style={{ marginTop: 8 }}>3867.92</Text>
            <IndexRow>
              <Text $size={24.500} $ls={0.300} $color={C.gray}>上证</Text>
              <Text $size={24.500} $ls={0.300} $ml={6}>-0.55%</Text>
            </IndexRow>
          </IndexItem>
          {ACTIONS.map(([label, Icon]) => (
            <BottomItem key={label}>
              <Icon />
              <Text $size={22.500}>{label}</Text>
            </BottomItem>
          ))}
        </BottomItems>
        <HomeIndicator />
      </BottomBar>
    </Screen>
  );
}
